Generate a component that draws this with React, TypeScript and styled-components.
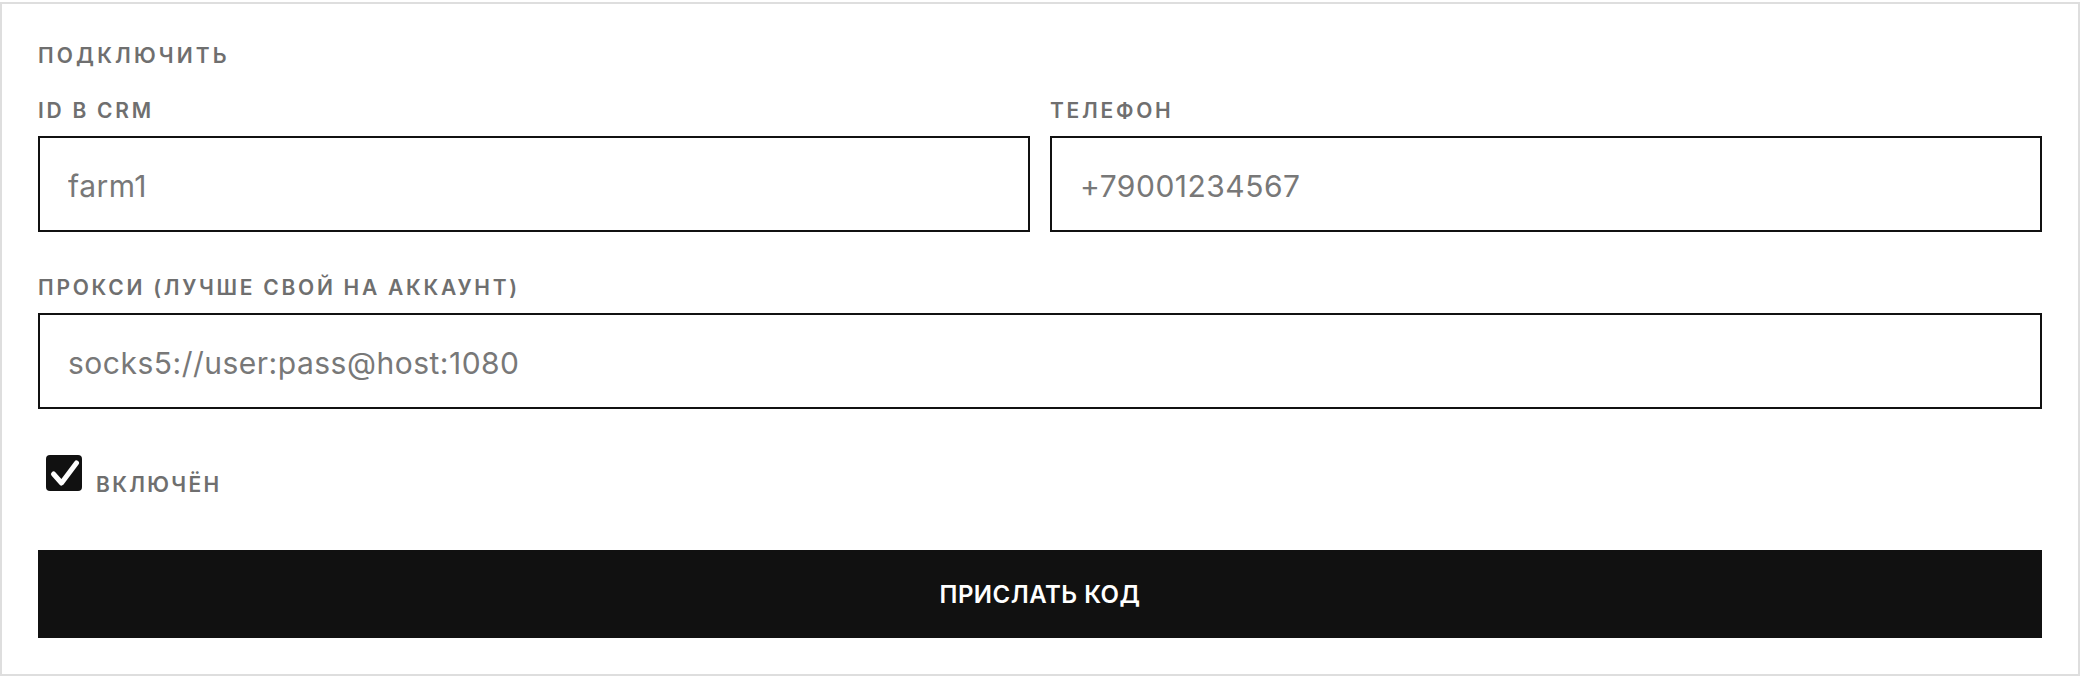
import React from "react";
import styled, { createGlobalStyle } from "styled-components";

const Global = createGlobalStyle`
  * { box-sizing: border-box; }
  html, body { margin: 0; padding: 0; background: #ffffff; }
  body { font-family: "Inter", "Noto Sans", sans-serif; }
`;

const Card = styled.section`
  margin-top: 2px;
  width: 2080px;
  height: 674px;
  border: 2px solid #dedede;
  background: #ffffff;
  padding: 40px 36px 36px;
  display: flex;
  flex-direction: column;
`;

const Title = styled.h2`
  margin: 0 0 31px;
  font-size: 21px;
  line-height: 24px;
  font-weight: 600;
  letter-spacing: 0.15em;
  color: #6f6f6f;
  text-transform: uppercase;
`;

const Row = styled.div`
  display: grid;
  grid-template-columns: 1fr 1fr;
  column-gap: 20px;
`;

const Field = styled.label<{ $mt?: number }>`
  display: flex;
  flex-direction: column;
  margin-top: ${(p) => p.$mt ?? 0}px;
`;

const Label = styled.span`
  display: block;
  font-size: 21px;
  line-height: 24px;
  font-weight: 600;
  letter-spacing: 0.13em;
  color: #6f6f6f;
  text-transform: uppercase;
  margin-bottom: 13px;
`;

const Input = styled.input`
  display: block;
  width: 100%;
  height: 96px;
  border: 2px solid #111111;
  border-radius: 0;
  padding: 3px 28px 0;
  font-family: "Inter", "Noto Sans", sans-serif;
  font-size: 30px;
  letter-spacing: 0.5px;
  color: #333;
  background: #fff;
  outline: none;
  &::placeholder {
    color: #787878;
    opacity: 1;
  }
`;

const CheckRow = styled.label`
  display: flex;
  align-items: flex-end;
  gap: 14px;
  margin-top: 46px;
  padding-left: 8px;
  cursor: pointer;
`;

const Box = styled.span`
  width: 36px;
  height: 36px;
  border-radius: 4px;
  background: #111111;
  display: flex;
  align-items: center;
  justify-content: center;
  flex: none;
`;

const CheckText = styled.span`
  font-size: 21px;
  line-height: 21px;
  font-weight: 600;
  letter-spacing: 0.11em;
  color: #6f6f6f;
  text-transform: uppercase;
  transform: translateY(4px);
`;

const Button = styled.button`
  margin-top: 59px;
  width: 100%;
  height: 88px;
  border: none;
  background: #111111;
  color: #ffffff;
  font-family: "Inter", "Noto Sans", sans-serif;
  font-size: 24px;
  font-weight: 600;
  letter-spacing: 0.02em;
  text-transform: uppercase;
  cursor: pointer;
`;

export default function App() {
  return (
    <>
      <Global />
      <Card>
        <Title>Подключить</Title>
        <Row>
          <Field>
            <Label>ID в CRM</Label>
            <Input placeholder="farm1" />
          </Field>
          <Field>
            <Label>Телефон</Label>
            <Input placeholder="+79001234567" />
          </Field>
        </Row>
        <Field $mt={44}>
          <Label>Прокси (лучше свой на аккаунт)</Label>
          <Input placeholder="socks5://user:pass@host:1080" />
        </Field>
        <CheckRow>
          <Box>
            <svg width="36" height="36" viewBox="0 0 36 36" aria-hidden="true">
              <path
                d="M7.5 19 L15.5 28 L30.5 8"
                fill="none"
                stroke="#ffffff"
                strokeWidth="5"
                strokeLinecap="round"
                strokeLinejoin="round"
              />
            </svg>
          </Box>
          <CheckText>Включён</CheckText>
        </CheckRow>
        <Button type="button">Прислать код</Button>
      </Card>
    </>
  );
}
